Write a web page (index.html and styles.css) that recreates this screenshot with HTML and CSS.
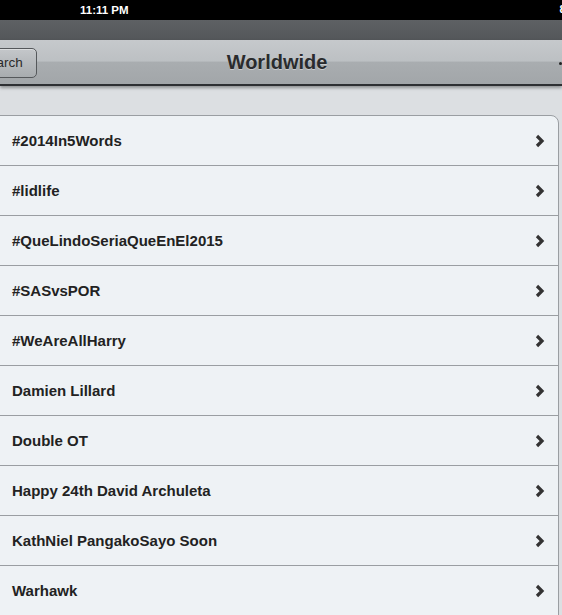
FILE: index.html
```html
<!DOCTYPE html>
<html>
<head>
<meta charset="utf-8">
<link rel="stylesheet" href="styles.css">
</head>
<body>
<div class="screen">
  <div class="status">
    <span class="time">11:11 PM</span>
    <span class="batt">8</span>
  </div>
  <div class="toolbar"></div>
  <div class="nav">
    <div class="nav-left"><button class="back">Search</button></div>
    <div class="title">Worldwide</div>
    <div class="nav-right"><span class="dot"></span></div>
  </div>
  <div class="content">
    <ul class="list">
      <li class="row"><span>#2014In5Words</span><svg class="chev" width="10" height="14" viewBox="0 0 10 14"><polyline points="2,2 7,7 2,12" fill="none" stroke="#333" stroke-width="3.2"/></svg></li>
      <li class="row"><span>#lidlife</span><svg class="chev" width="10" height="14" viewBox="0 0 10 14"><polyline points="2,2 7,7 2,12" fill="none" stroke="#333" stroke-width="3.2"/></svg></li>
      <li class="row"><span>#QueLindoSeriaQueEnEl2015</span><svg class="chev" width="10" height="14" viewBox="0 0 10 14"><polyline points="2,2 7,7 2,12" fill="none" stroke="#333" stroke-width="3.2"/></svg></li>
      <li class="row"><span>#SASvsPOR</span><svg class="chev" width="10" height="14" viewBox="0 0 10 14"><polyline points="2,2 7,7 2,12" fill="none" stroke="#333" stroke-width="3.2"/></svg></li>
      <li class="row"><span>#WeAreAllHarry</span><svg class="chev" width="10" height="14" viewBox="0 0 10 14"><polyline points="2,2 7,7 2,12" fill="none" stroke="#333" stroke-width="3.2"/></svg></li>
      <li class="row"><span>Damien Lillard</span><svg class="chev" width="10" height="14" viewBox="0 0 10 14"><polyline points="2,2 7,7 2,12" fill="none" stroke="#333" stroke-width="3.2"/></svg></li>
      <li class="row"><span>Double OT</span><svg class="chev" width="10" height="14" viewBox="0 0 10 14"><polyline points="2,2 7,7 2,12" fill="none" stroke="#333" stroke-width="3.2"/></svg></li>
      <li class="row"><span>Happy 24th David Archuleta</span><svg class="chev" width="10" height="14" viewBox="0 0 10 14"><polyline points="2,2 7,7 2,12" fill="none" stroke="#333" stroke-width="3.2"/></svg></li>
      <li class="row"><span>KathNiel PangakoSayo Soon</span><svg class="chev" width="10" height="14" viewBox="0 0 10 14"><polyline points="2,2 7,7 2,12" fill="none" stroke="#333" stroke-width="3.2"/></svg></li>
      <li class="row"><span>Warhawk</span><svg class="chev" width="10" height="14" viewBox="0 0 10 14"><polyline points="2,2 7,7 2,12" fill="none" stroke="#333" stroke-width="3.2"/></svg></li>
    </ul>
  </div>
</div>
</body>
</html>
```

FILE: styles.css
```css
html, body {
  margin: 0;
  padding: 0;
  background: #dcdfe2;
  overflow: hidden;
}
.screen {
  width: 562px;
  height: 615px;
  overflow: hidden;
  display: flex;
  flex-direction: column;
  font-family: "Liberation Sans", Arial, sans-serif;
}
.status {
  height: 20px;
  background: #000;
  color: #fff;
  display: flex;
  align-items: center;
  justify-content: space-between;
  font-size: 11.5px;
  font-weight: bold;
  flex-shrink: 0;
}
.time {
  margin-left: 80px;
}
.batt {
  margin-right: -4px;
  align-self: flex-start;
  margin-top: 3px;
}
.toolbar {
  height: 20px;
  background: linear-gradient(#5e6164, #54575a);
  flex-shrink: 0;
}
.nav {
  height: 44px;
  flex-shrink: 0;
  display: grid;
  grid-template-columns: 1fr auto 1fr;
  align-items: center;
  background: linear-gradient(#c6c9cc 0%, #bcc0c3 48%, #a9adb0 50%, #a2a6a9 100%);
  border-bottom: 2px solid #2e3033;
  box-shadow: 0 2px 3px rgba(0,0,0,0.35);
  position: relative;
  z-index: 1;
}
.nav-left {
  display: flex;
}
.back {
  margin-left: -33px;
  margin-top: 1px;
  height: 30px;
  padding: 0 13px 0 12px;
  font-family: "Liberation Sans", Arial, sans-serif;
  font-size: 13.5px;
  color: #2a2a2a;
  background: linear-gradient(#c4c7ca, #a8acaf);
  border: 1px solid #55585b;
  border-radius: 5px;
  box-shadow: inset 0 1px 0 rgba(255,255,255,0.4);
}
.title {
  font-size: 20px;
  font-weight: bold;
  color: #2a2b2d;
  text-shadow: 0 1px 0 rgba(255,255,255,0.4);
  margin-left: -8px;
}
.nav-right {
  display: flex;
  justify-content: flex-end;
}
.dot {
  width: 3px;
  height: 3px;
  background: #222;
  border-radius: 50%;
  margin-top: 2px;
}
.content {
  flex: 1;
  padding-top: 29px;
}
.list {
  list-style: none;
  margin: 0 3px 0 -10px;
  padding: 0;
  background: #eef2f5;
  border: 1px solid #9a9ea2;
  border-radius: 0 8px 0 0;
}
.row {
  height: 50px;
  display: flex;
  align-items: center;
  justify-content: space-between;
  padding: 0 13px 0 21px;
  border-top: 1px solid #9a9ea2;
  box-sizing: border-box;
  font-size: 15px;
  font-weight: bold;
  color: #222;
}
.row:first-child {
  border-top: none;
  height: 49px;
}
.chev {
  display: block;
}
```
